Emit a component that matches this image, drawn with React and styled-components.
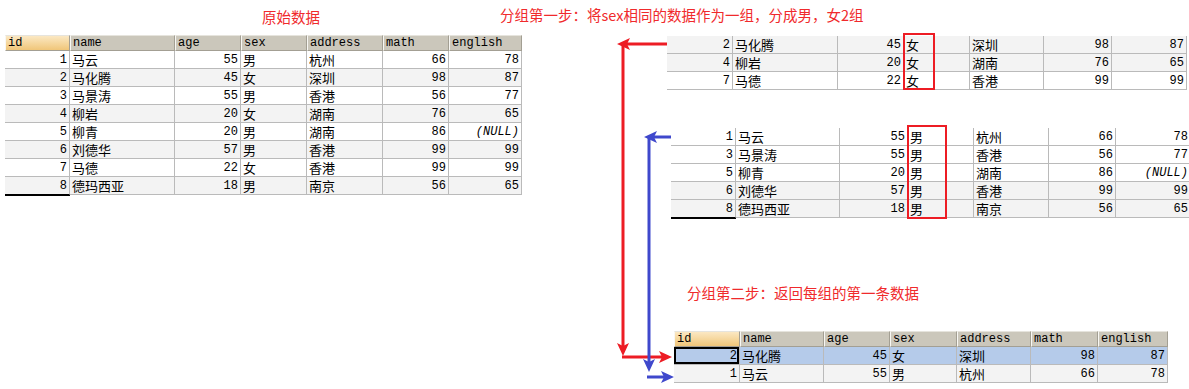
import React from 'react';
import styled, { createGlobalStyle } from 'styled-components';

const GlobalStyle = createGlobalStyle`
  body {
    margin: 0;
    background: #ffffff;
    overflow: hidden;
  }
`;

const RED = '#ed1c24';
const BLUE = '#3f48cc';

const Page = styled.div`
  position: relative;
  width: 1189px;
  height: 389px;
  display: flex;
  overflow: hidden;
  background: #ffffff;
`;

const LeftCol = styled.div`
  width: 522px;
  padding-left: 5px;
  box-sizing: border-box;
  flex-shrink: 0;
`;

const RightCol = styled.div`
  flex: 1;
  display: flex;
  flex-direction: column;
  align-items: flex-start;
`;

const Title = styled.div`
  height: ${p => p.$h}px;
  line-height: ${p => p.$lh}px;
  margin-top: ${p => p.$mt || 0}px;
  margin-left: ${p => p.$ml || 0}px;
  padding-left: ${p => p.$indent || 0}px;
  font-family: "Noto Sans CJK SC", sans-serif;
  font-size: 14.5px;
  color: #f02a2c;
  white-space: nowrap;
`;

const Grid = styled.div`
  position: relative;
  margin-left: ${p => p.$ml || 0}px;
  margin-top: ${p => p.$mt || 0}px;
`;

const Row = styled.div`
  display: grid;
  grid-template-columns: ${p => p.$cols.map(c => c + 'px').join(' ')};
  height: ${p => (p.$head ? 16 : 18)}px;
  background: ${p => (p.$tone === 'sel' ? '#b5cbea' : p.$tone === 'gray' ? '#f3f3f3' : '#ffffff')};
`;

const HeadCell = styled.div`
  box-sizing: border-box;
  height: 16px;
  padding-left: 2px;
  display: flex;
  align-items: center;
  font-family: "Liberation Mono", monospace;
  font-size: 12px;
  color: #000;
  background: ${p => (p.$sorted ? 'linear-gradient(#fbe8c3, #f0c679)' : '#cbc7bb')};
  border-top: 1px solid #e6e4dd;
  border-left: 1px solid #f8f7f3;
  border-right: 1px solid #a39f93;
  border-bottom: 1px solid #a39f93;
`;

const Cell = styled.div`
  box-sizing: border-box;
  height: 18px;
  display: flex;
  align-items: center;
  justify-content: ${p => (p.$right ? 'flex-end' : 'flex-start')};
  padding: ${p => (p.$right ? '0 2px 0 0' : '0 0 0 2px')};
  font-family: ${p => (p.$cjk ? '"Noto Sans CJK SC", sans-serif' : '"Liberation Mono", monospace')};
  font-size: ${p => (p.$cjk ? 13 : 12)}px;
  font-style: ${p => (p.$null ? 'italic' : 'normal')};
  color: #000;
  white-space: nowrap;
  overflow: hidden;
  border-right: 1px solid #bababa;
  border-bottom: 1px solid ${p => (p.$mark ? '#000' : '#bababa')};
  box-shadow: ${p => (p.$focus ? 'inset 0 0 0 2px #000' : p.$mark ? '0 1px 0 #000' : 'none')};
`;

const RedBox = styled.div`
  position: absolute;
  left: ${p => p.$x}px;
  top: ${p => p.$y}px;
  width: ${p => p.$w}px;
  height: ${p => p.$h}px;
  border: 2px solid ${RED};
  box-sizing: border-box;
  pointer-events: none;
`;

const Overlay = styled.svg`
  position: absolute;
  left: 0;
  top: 0;
  pointer-events: none;
`;

const students = [
  { id: 1, name: '马云', age: 55, sex: '男', address: '杭州', math: 66, english: 78 },
  { id: 2, name: '马化腾', age: 45, sex: '女', address: '深圳', math: 98, english: 87 },
  { id: 3, name: '马景涛', age: 55, sex: '男', address: '香港', math: 56, english: 77 },
  { id: 4, name: '柳岩', age: 20, sex: '女', address: '湖南', math: 76, english: 65 },
  { id: 5, name: '柳青', age: 20, sex: '男', address: '湖南', math: 86, english: null },
  { id: 6, name: '刘德华', age: 57, sex: '男', address: '香港', math: 99, english: 99 },
  { id: 7, name: '马德', age: 22, sex: '女', address: '香港', math: 99, english: 99 },
  { id: 8, name: '德玛西亚', age: 18, sex: '男', address: '南京', math: 56, english: 65 },
];

const byId = ids => ids.map(i => students.find(s => s.id === i));

const headers = ['id', 'name', 'age', 'sex', 'address', 'math', 'english'];

function DataTable({ cols, rows, head, tones, mark, focus, ml, mt, children }) {
  return (
    <Grid $ml={ml} $mt={mt}>
      {head && (
        <Row $cols={cols} $head>
          {headers.map((h, i) => (
            <HeadCell key={h} $sorted={i === 0}>{h}</HeadCell>
          ))}
        </Row>
      )}
      {rows.map((r, i) => {
        const tone = tones ? tones[i] : (r.id % 2 === 0 ? 'gray' : 'white');
        const last = i === rows.length - 1;
        return (
          <Row key={r.id} $cols={cols} $tone={tone}>
            <Cell $right $mark={mark && last} $focus={focus === i}>{r.id}</Cell>
            <Cell $cjk>{r.name}</Cell>
            <Cell $right>{r.age}</Cell>
            <Cell $cjk>{r.sex}</Cell>
            <Cell $cjk>{r.address}</Cell>
            <Cell $right>{r.math}</Cell>
            <Cell $right $null={r.english === null}>{r.english === null ? '(NULL)' : r.english}</Cell>
          </Row>
        );
      })}
      {children}
    </Grid>
  );
}

const headLeft = (x, y) => `${x},${y} ${x + 13},${y - 6} ${x + 10},${y} ${x + 13},${y + 6}`;
const headRight = (x, y) => `${x},${y} ${x - 13},${y - 6} ${x - 10},${y} ${x - 13},${y + 6}`;
const headDown = (x, y) => `${x},${y} ${x - 6},${y - 13} ${x},${y - 10} ${x + 6},${y - 13}`;

function Arrows() {
  return (
    <Overlay width="1189" height="389" viewBox="0 0 1189 389">
      <g stroke={RED} strokeWidth="3" fill="none">
        <line x1="667" y1="44" x2="627" y2="44" />
        <line x1="623" y1="44" x2="623" y2="350" />
        <line x1="622" y1="357" x2="663" y2="357" />
      </g>
      <g fill={RED}>
        <polygon points={headLeft(617, 44)} />
        <polygon points={headDown(623, 356)} />
        <polygon points={headRight(672, 357)} />
      </g>
      <g stroke={BLUE} strokeWidth="3" fill="none">
        <line x1="671" y1="137" x2="654" y2="137" />
        <line x1="649" y1="137" x2="649" y2="366" />
        <line x1="647" y1="377" x2="665" y2="377" />
      </g>
      <g fill={BLUE}>
        <polygon points={headLeft(644, 137)} />
        <polygon points={headDown(649, 372)} />
        <polygon points={headRight(674, 377)} />
      </g>
    </Overlay>
  );
}

const mainCols = [65, 105, 66, 66, 76, 66, 73];
const groupCols = [66, 105, 66, 66, 74, 68, 75];
const maleCols = [65, 104, 68, 66, 75, 67, 75];
const resultCols = [66, 84, 66, 67, 74, 67, 70];

export default function App() {
  return (
    <Page>
      <GlobalStyle />
      <LeftCol>
        <Title $h={35} $lh={34} $indent={257}>原始数据</Title>
        <DataTable cols={mainCols} rows={students} head mark />
      </LeftCol>
      <RightCol>
        <Title $h={36} $lh={30} $ml={-22}>分组第一步：将sex相同的数据作为一组，分成男，女2组</Title>
        <DataTable cols={groupCols} rows={byId([2, 4, 7])} ml={145}>
          <RedBox $x={236} $y={-3} $w={32} $h={57} />
        </DataTable>
        <DataTable cols={maleCols} rows={byId([1, 3, 5, 6, 8])} ml={149} mt={38} mark>
          <RedBox $x={236} $y={-3} $w={40} $h={94} />
        </DataTable>
        <Title $h={30} $lh={30} $mt={60} $ml={165}>分组第二步：返回每组的第一条数据</Title>
        <DataTable
          cols={resultCols}
          rows={byId([2, 1])}
          head
          tones={['sel', 'gray']}
          focus={0}
          ml={152}
          mt={23}
        />
      </RightCol>
      <Arrows />
    </Page>
  );
}
